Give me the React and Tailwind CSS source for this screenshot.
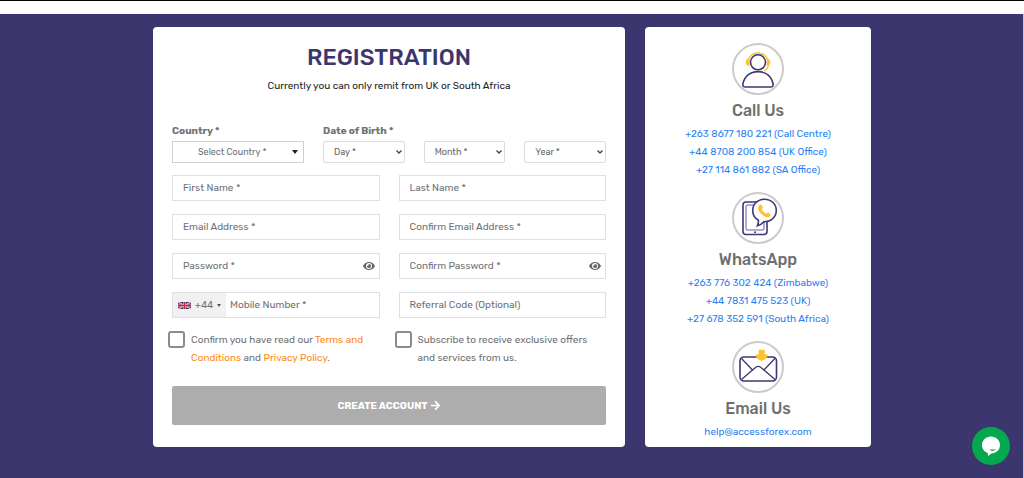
import { FaArrowRight, FaEye } from 'react-icons/fa';

const fieldClass =
  'h-[26px] w-full min-w-0 border border-[#dfe0e4] bg-white px-[10px] text-[10px] text-[#6f7174] placeholder:text-[#6f7174] placeholder:opacity-100 outline-none focus:border-[#3c366f]';

function Field({ label, type = 'text' }) {
  return <input type={type} aria-label={label} placeholder={label} className={fieldClass} />;
}

function PasswordField({ label }) {
  return (
    <div className="relative">
      <input type="password" aria-label={label} placeholder={label} className={fieldClass} />
      <button type="button" aria-label="Show password" className="absolute inset-y-0 right-[5px] flex items-center text-[#65686c]">
        <FaEye size={12} />
      </button>
    </div>
  );
}

function DateSelect({ label }) {
  return (
    <div className="relative">
      <select aria-label={label} className="h-[22px] w-full appearance-none rounded-xs border border-[#dbdce3] bg-white px-[10px] text-[9px] text-[#65686c]">
        <option>{label}</option>
      </select>
      <svg viewBox="0 0 8 6" className="pointer-events-none absolute right-[2px] top-2 h-[6px] w-2" fill="none" stroke="#3f4247" strokeWidth="1.3">
        <path d="M1.5 1.5 4 4l2.500-2.500" />
      </svg>
    </div>
  );
}

function UkFlag() {
  return (
    <svg viewBox="0 0 13 7" className="h-[7px] w-[13px]" aria-hidden="true">
      <path fill="#29387a" d="M0 0h13v7H0z" />
      <path d="m0 0 13 7M13 0 0 7" stroke="#fff" strokeWidth="1.200" />
      <path d="m0 0 13 7M13 0 0 7" stroke="#d3354a" strokeWidth=".5" />
      <path d="M6.500 0v7M0 3.500h13" stroke="#f4d5dc" strokeWidth="2.200" />
      <path d="M6.500 0v7M0 3.500h13" stroke="#d3263c" strokeWidth="1.300" />
    </svg>
  );
}

function CallIcon() {
  return (
    <svg viewBox="0 0 52 52" className="size-[52px]" fill="none" aria-hidden="true">
      <circle cx="26" cy="26" r="25" stroke="#cbcbcb" strokeWidth="2" />
      <path d="M16.300 17a10 9.400 0 0 1 19.400 0" stroke="#fdc432" strokeWidth="1.500" />
      <path d="M17.400 15.500c-2.300 0-3.700 1.500-3.700 3.800s1.400 3.700 3.700 3.700zM34.600 15.500c2.300 0 3.700 1.500 3.700 3.800s-1.400 3.700-3.700 3.700z" fill="#fdc432" />
      <path d="M36.300 22c-.3 3-1.600 4.800-4.200 5.800" stroke="#fdc432" strokeWidth="1.500" />
      <circle cx="26" cy="19.300" r="7.500" fill="#fff" stroke="#3d3876" strokeWidth="1.600" />
      <path d="M13.300 44h25.400c1.800 0 2.700-1.200 2.400-3C39.700 33.500 33.800 28.600 26 28.600S12.300 33.500 10.900 41c-.3 1.800.6 3 2.400 3Z" stroke="#3d3876" strokeWidth="1.600" />
    </svg>
  );
}

function WhatsAppIcon() {
  return (
    <svg viewBox="0 0 52 52" className="size-[52px]" fill="none" aria-hidden="true">
      <circle cx="26" cy="26" r="25" stroke="#cbcbcb" strokeWidth="2" />
      <rect x="11" y="10" width="24" height="32.500" rx="3" stroke="#3d3876" strokeWidth="1.600" />
      <rect x="14" y="13" width="18" height="25" rx="1" stroke="#3d3876" strokeWidth=".8" />
      <circle cx="23" cy="40.200" r="1" fill="#3d3876" />
      <path d="M32.500 7.200c-6.800 0-11.800 5-11.800 11.300 0 4.200 2.200 7.700 5.700 9.700.2 1.900-.1 3.700-1 5.600 2.700-.8 4.800-2.200 6.400-4.100 7 .5 12.500-4.700 12.500-11.200 0-6.300-5-11.300-11.800-11.300Z" fill="#fff" stroke="#3d3876" strokeWidth="1.600" />
      <path d="M27 13.600c1-1.300 2-1.500 2.800-.4l1 1.900c.5 1.100-1.100 1.600-.8 2.500.8 1.700 2 2.900 3.700 3.800 1 .4 1.500-1 2.600-.6l1.700 1c1.100.8.8 1.800-.5 2.700-2.100 1.100-4.300.6-7.100-1.500-3.500-2.700-5.300-6.600-3.400-9.400Z" fill="#fdc432" />
    </svg>
  );
}

function EmailIcon() {
  return (
    <svg viewBox="0 0 52 52" className="size-[52px]" fill="none" aria-hidden="true">
      <circle cx="26" cy="26" r="25" stroke="#cbcbcb" strokeWidth="2" />
      <rect x="8" y="16" width="36.500" height="24" rx="4" stroke="#3d3876" strokeWidth="1.600" />
      <path d="m9.500 17.500 11 11.500 3-2.500c1.700-1.400 3.700-1.400 5.400 0l3 2.500 11-11.500M9.500 38.500l11-9.500M43 38.500 32 29" stroke="#3d3876" strokeWidth="1.300" />
      <path d="M26.700 8.800h6v4.700h2.900c.5 3-2.500 5-5.900 6.500-3.400-1.500-6.400-3.500-5.900-6.500h2.900Z" fill="#fdc432" />
    </svg>
  );
}

const contacts = [
  {
    title: 'Call Us',
    Icon: CallIcon,
    links: [
      ['+263 8677 180 221 (Call Centre)', 'tel:+2638677180221'],
      ['+44 8708 200 854 (UK Office)', 'tel:+448708200854'],
      ['+27 114 861 882 (SA Office)', 'tel:+27114861882'],
    ],
  },
  {
    title: 'WhatsApp',
    Icon: WhatsAppIcon,
    links: [
      ['+263 776 302 424 (Zimbabwe)', 'https://wa.me/263776302424'],
      ['+44 7831 475 523 (UK)', 'https://wa.me/447831475523'],
      ['+27 678 352 591 (South Africa)', 'https://wa.me/27678352591'],
    ],
  },
  { title: 'Email Us', Icon: EmailIcon, links: [['help@accessforex.com', 'mailto:help@accessforex.com']] },
];

const checkClass = 'size-[17px] shrink-0 appearance-none rounded-[3px] border-2 border-[#8c8c8c] bg-white checked:bg-[#3c366f]';

export default function App() {
  return (
    <div className="flex min-h-screen flex-col bg-[#3c366f] font-[Rubik,Roboto,sans-serif] text-[10px] leading-[18px] text-[#6f7174] shadow-[inset_-1px_0_#c9c8d6]">
      <header className="h-[14px] border-t border-black bg-white" />
      <main className="mx-auto flex w-full max-w-[718px] gap-5 pb-[30px] pt-[13px]">
        <form className="min-w-0 flex-1 rounded-sm bg-white px-[19px] pb-[22px] pt-4" onSubmit={(e) => e.preventDefault()}>
          <h1 className="text-center text-[23px] font-medium leading-7 text-[#3c366f]">REGISTRATION</h1>
          <p className="mt-[6px] text-center text-[#212529]">Currently you can only remit from UK or South Africa</p>

          <div className="mt-[27px] flex gap-[19px]">
            <div className="w-[132px]">
              <label htmlFor="country" className="mb-px block font-bold">Country *</label>
              <div className="relative">
                <select id="country" className="h-[22px] w-full appearance-none border border-[#cfd0d2] bg-white pl-[25px] text-[9px] text-[#6f7174]">
                  <option>Select Country *</option>
                </select>
                <svg viewBox="0 0 6 4" className="pointer-events-none absolute right-[6px] top-[9px] h-1 w-[6px]">
                  <path d="M0 0h6L3 4z" fill="#222" />
                </svg>
              </div>
            </div>
            <fieldset className="min-w-0 flex-1">
              <legend className="mb-px block font-bold">Date of Birth *</legend>
              <div className="grid grid-cols-3 gap-[19px]">
                <DateSelect label="Day *" />
                <DateSelect label="Month *" />
                <DateSelect label="Year *" />
              </div>
            </fieldset>
          </div>

          <div className="mt-3 grid grid-cols-2 gap-x-[19px] gap-y-[13px]">
            <Field label="First Name *" />
            <Field label="Last Name *" />
            <Field label="Email Address *" type="email" />
            <Field label="Confirm Email Address *" type="email" />
            <PasswordField label="Password *" />
            <PasswordField label="Confirm Password *" />
            <div className="flex h-[26px] border border-[#dfe0e4]">
              <button type="button" aria-label="Country code +44" className="flex w-[53px] shrink-0 items-center justify-center gap-1 bg-[#f1f1f1]">
                <UkFlag />
                <span>+44</span>
                <svg viewBox="0 0 4 3" className="h-[3px] w-1"><path d="M0 0h4L2 3z" fill="#555" /></svg>
              </button>
              <input type="tel" aria-label="Mobile Number *" placeholder="Mobile Number *" className="min-w-0 flex-1 px-1 outline-none placeholder:text-[#6f7174] placeholder:opacity-100" />
            </div>
            <Field label="Referral Code (Optional)" />
          </div>

          <div className="mt-[13px] grid grid-cols-2 gap-x-[19px]">
            <div className="-ml-1 flex items-start gap-[6px] pr-3">
              <input id="terms" type="checkbox" className={checkClass} />
              <label htmlFor="terms">
                Confirm you have read our <a href="#terms" className="text-[#fd8b20]">Terms and Conditions</a> and{' '}
                <a href="#privacy" className="text-[#fd8b20]">Privacy Policy</a>.
              </label>
            </div>
            <div className="-ml-1 flex items-start gap-[6px] pr-3">
              <input id="offers" type="checkbox" className={checkClass} />
              <label htmlFor="offers">Subscribe to receive exclusive offers and services from us.</label>
            </div>
          </div>

          <button type="submit" className="mt-[19px] flex h-[39px] w-full items-center justify-center gap-[2px] rounded-xs bg-[#adadad] font-bold text-white">
            CREATE ACCOUNT <FaArrowRight size={11} />
          </button>
        </form>

        <aside className="flex w-[226px] shrink-0 flex-col gap-[13px] rounded-sm bg-white pt-4">
          {contacts.map(({ title, Icon, links }) => (
            <section key={title} className="flex flex-col items-center">
              <Icon />
              <h2 className="mb-[2px] mt-1 text-[16px] font-medium leading-6 text-[#6f6f70]">{title}</h2>
              {links.map(([text, href]) => (
                <a key={text} href={href} className="text-[#2a80f5]">{text}</a>
              ))}
            </section>
          ))}
        </aside>
      </main>

      <button type="button" aria-label="Open chat" className="fixed bottom-[13px] right-[14px] flex size-[38px] items-center justify-center rounded-full bg-[#05a84e]">
        <svg viewBox="0 0 20 20" className="size-5" aria-hidden="true">
          <path d="M10 .5c5.100 0 9 3.700 9 8.500 0 4.900-3.800 8.400-8.700 8.600L7 20l-.2-3C3.300 15.900 1 12.900 1 9 1 4.200 4.900.5 10 .5Z" fill="#fff" />
          <path d="M8.500 13.300c2.200.5 4.300.4 6.300-.2-1.500 2.200-4.700 2.500-6.300.2Z" fill="#05a84e" />
        </svg>
      </button>
    </div>
  );
}
